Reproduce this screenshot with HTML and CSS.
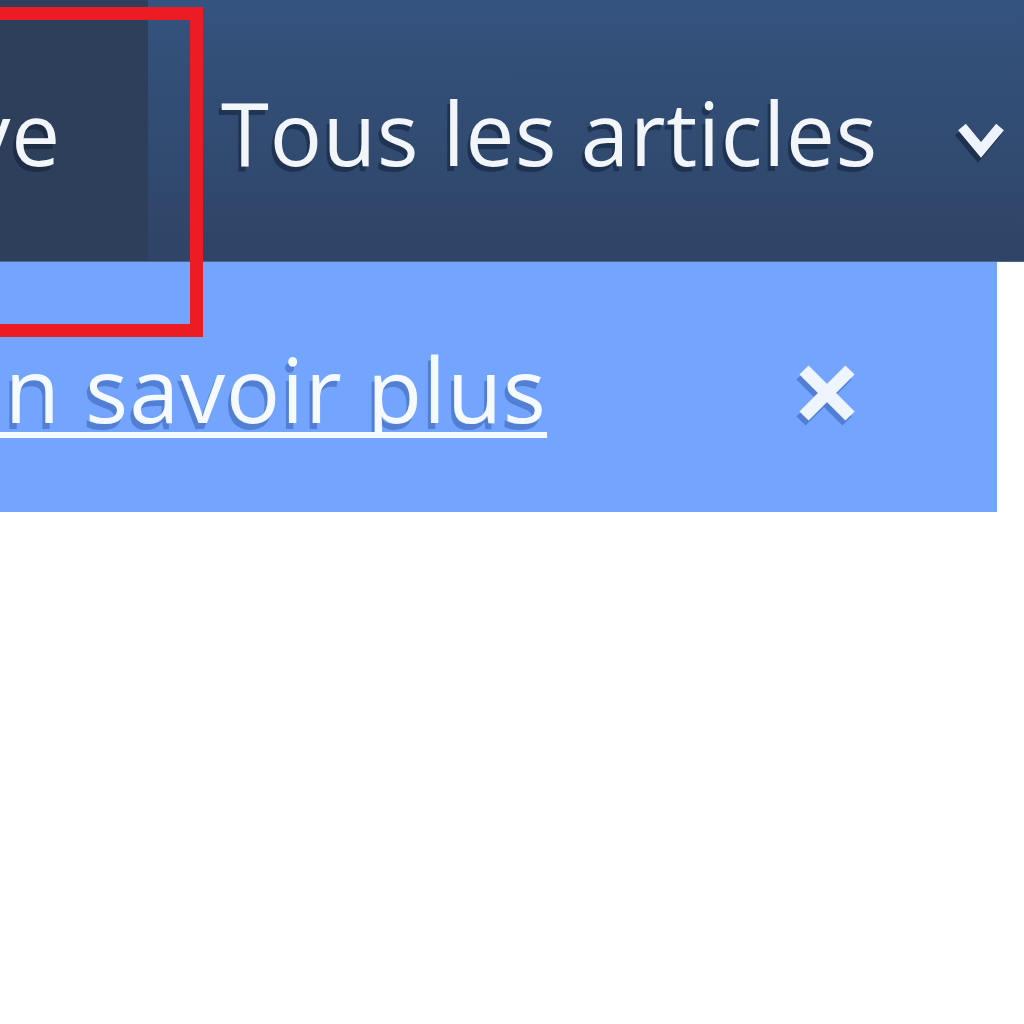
FILE: index.html
```html
<!DOCTYPE html>
<html lang="fr">
<head>
<meta charset="utf-8">
<title>Navigation</title>
<link rel="stylesheet" href="styles.css">
</head>
<body>
<header class="nav">
  <div class="nav-item nav-item--active"><span class="nav-label">Archive</span></div>
  <div class="nav-item nav-item--menu">
    <span class="nav-label">Tous les articles</span>
    <svg class="chevron" width="56" height="44" viewBox="0 0 56 44" aria-hidden="true">
      <polyline points="6,8 25,31 44,8" fill="none" stroke="#eef4fb" stroke-width="10" stroke-linejoin="miter"/>
    </svg>
  </div>
</header>
<div class="banner">
  <div class="banner-text"><a class="banner-link" href="#">En savoir plus</a></div>
  <button class="banner-close" aria-label="Fermer">
    <svg width="66" height="66" viewBox="0 0 66 66" aria-hidden="true">
      <path d="M10 10 L56 56 M56 10 L10 56" stroke="#eef5ff" stroke-width="13" fill="none"/>
    </svg>
  </button>
</div>
<div class="focus-ring"></div>
</body>
</html>
```
FILE: styles.css
```css
html, body {
  margin: 0;
  padding: 0;
  background: #ffffff;
}
body {
  font-family: "Open Sans", "Noto Sans", sans-serif;
  width: 1024px;
  height: 1024px;
  overflow: hidden;
  position: relative;
}
.nav {
  display: flex;
  height: 261px;
  background: linear-gradient(#34537e, #2f4466);
  border-bottom: 1px solid #4f6489;
}
.nav-item {
  display: flex;
  align-items: flex-start;
  box-sizing: border-box;
  padding-top: 82px;
  color: #f2f6fb;
  font-size: 87px;
  letter-spacing: 0.8px;
  line-height: 100px;
  text-shadow: -3px 5px 0 rgba(12, 22, 45, 0.45);
  white-space: nowrap;
}
.nav-item--active {
  width: 148px;
  flex: none;
  justify-content: flex-end;
  padding-right: 87px;
  overflow: hidden;
  background: #2e3f5b;
}
.nav-item--menu {
  flex: 1;
  padding-left: 73px;
}
.chevron {
  margin-left: 78px;
  margin-top: 37px;
  filter: drop-shadow(-3px 5px 0 rgba(12, 22, 45, 0.5));
}
.banner {
  display: flex;
  align-items: flex-start;
  width: 997px;
  height: 250px;
  background: #73a5fe;
}
.banner-text {
  display: flex;
  justify-content: flex-end;
  width: 547px;
  flex: none;
  overflow: hidden;
  padding-top: 76px;
}
.banner-link {
  color: #f4faff;
  font-size: 90px;
  letter-spacing: 1px;
  line-height: 100px;
  white-space: nowrap;
  text-decoration: underline;
  text-decoration-thickness: 6px;
  text-underline-offset: 9px;
  text-decoration-skip-ink: none;
  text-shadow: -3px 6px 0 rgba(50, 90, 170, 0.5);
}
.banner-close {
  margin-left: 247px;
  margin-top: 98px;
  padding: 0;
  border: 0;
  background: none;
  width: 66px;
  height: 66px;
  filter: drop-shadow(-3px 5px 0 rgba(50, 90, 170, 0.5));
}
.banner-close svg {
  display: block;
}
.focus-ring {
  position: absolute;
  left: -30px;
  top: 7px;
  width: 207px;
  height: 304px;
  border: 13px solid #ec1c24;
  pointer-events: none;
}
```
